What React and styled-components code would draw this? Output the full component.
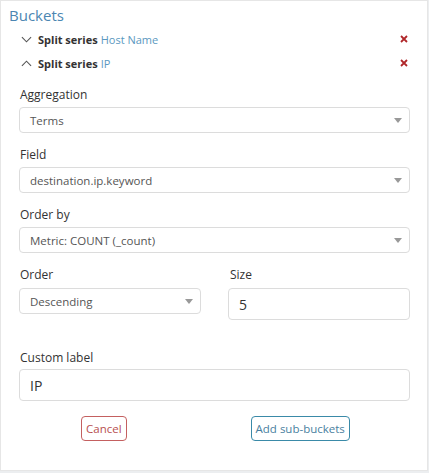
import React from "react";
import styled, { createGlobalStyle } from "styled-components";

const Global = createGlobalStyle`
  html, body { margin: 0; padding: 0; background: #eceef0; }
  body { font-family: "Open Sans", "Noto Sans", sans-serif; color: #333; }
  * { box-sizing: border-box; }
`;

const Panel = styled.div`
  width: 428px;
  height: 471px;
  background: #fff;
  border: 1px solid #e6e6e6;
  padding: 4px 17px 0 18px;
  display: flex;
  flex-direction: column;
`;

const Title = styled.div`
  font-size: 15px;
  color: #4b86b2;
  margin-left: -10px;
  line-height: 20px;
`;

const SeriesRow = styled.div`
  display: flex;
  align-items: center;
  height: 24px;
  font-size: 11px;
  padding-left: 2px;
  padding-right: 2px;
`;

const Chevron = styled.svg`
  width: 11px;
  height: 11px;
  margin-right: 6px;
  flex: none;
`;

const Bold = styled.span`
  font-weight: 700;
  color: #333;
  margin-right: 3px;
`;

const Name = styled.span`
  color: #5a98c0;
  flex: 1;
`;

const Close = styled.svg`
  width: 8px;
  height: 8px;
  flex: none;
`;

const Form = styled.div`
  display: flex;
  flex-direction: column;
  margin-top: 12px;
`;

const Field = styled.div`
  display: flex;
  flex-direction: column;
  margin-bottom: ${(p) => p.$mb ?? 14}px;
  flex: ${(p) => (p.$grow ? 1 : "none")};
`;

const Label = styled.label`
  font-size: 12px;
  color: #333;
  line-height: 16px;
  margin-bottom: ${(p) => p.$mb ?? 4}px;
  padding-left: ${(p) => p.$pl ?? 1}px;
`;

const SelectBox = styled.div`
  height: 26px;
  border: 1px solid #dcdcdc;
  border-radius: 4px;
  display: flex;
  align-items: center;
  padding: 0 7px 0 10px;
  font-size: 11.5px;
  color: #555;
`;

const SelectText = styled.span`
  flex: 1;
`;

const Caret = styled.svg`
  width: 8px;
  height: 5px;
`;

const InputBox = styled.div`
  height: 32px;
  border: 1px solid #dcdcdc;
  border-radius: 4px;
  display: flex;
  align-items: center;
  padding: 0 10px;
  font-size: 14px;
  color: #333;
`;

const Row = styled.div`
  display: flex;
  gap: 27px;
`;

const Buttons = styled.div`
  display: flex;
  padding-left: 62px;
  gap: 124px;
`;

const Button = styled.button`
  height: 25px;
  padding: 0 4px;
  background: #fff;
  border-radius: 4px;
  font-family: inherit;
  font-size: 11.5px;
  border: 1px solid ${(p) => p.$color};
  color: ${(p) => p.$text};
`;

const ChevronIcon = ({ up }) => (
  <Chevron viewBox="0 0 12 12">
    <path
      d={up ? "M1 8.5 L6 3.5 L11 8.5" : "M1 3.5 L6 8.5 L11 3.5"}
      fill="none"
      stroke="#555"
      strokeWidth="1.2"
    />
  </Chevron>
);

const CloseIcon = () => (
  <Close viewBox="0 0 8 8">
    <path d="M1 1 L7 7 M7 1 L1 7" stroke="#b0272a" strokeWidth="1.8" />
  </Close>
);

const Select = ({ value }) => (
  <SelectBox>
    <SelectText>{value}</SelectText>
    <Caret viewBox="0 0 8 5">
      <path d="M0 0 L8 0 L4 5 Z" fill="#999" />
    </Caret>
  </SelectBox>
);

export default function App() {
  return (
    <>
      <Global />
      <Panel>
        <Title>Buckets</Title>
        <SeriesRow style={{ marginTop: 2 }}>
          <ChevronIcon />
          <Bold>Split series</Bold>
          <Name>Host Name</Name>
          <CloseIcon />
        </SeriesRow>
        <SeriesRow>
          <ChevronIcon up />
          <Bold>Split series</Bold>
          <Name>IP</Name>
          <CloseIcon />
        </SeriesRow>
        <Form>
          <Field>
            <Label>Aggregation</Label>
            <Select value="Terms" />
          </Field>
          <Field>
            <Label>Field</Label>
            <Select value="destination.ip.keyword" />
          </Field>
          <Field>
            <Label>Order by</Label>
            <Select value="Metric: COUNT (_count)" />
          </Field>
          <Row>
            <Field $grow $mb={30}>
              <Label $mb={5}>Order</Label>
              <Select value="Descending" />
            </Field>
            <Field $grow $mb={30}>
              <Label $mb={5} $pl={2}>Size</Label>
              <InputBox>5</InputBox>
            </Field>
          </Row>
          <Field $mb={15}>
            <Label $mb={3}>Custom label</Label>
            <InputBox>IP</InputBox>
          </Field>
          <Buttons>
            <Button $color="#c46060" $text="#b85050">Cancel</Button>
            <Button $color="#3a8aa8" $text="#4a7fa0">Add sub-buckets</Button>
          </Buttons>
        </Form>
      </Panel>
    </>
  );
}
